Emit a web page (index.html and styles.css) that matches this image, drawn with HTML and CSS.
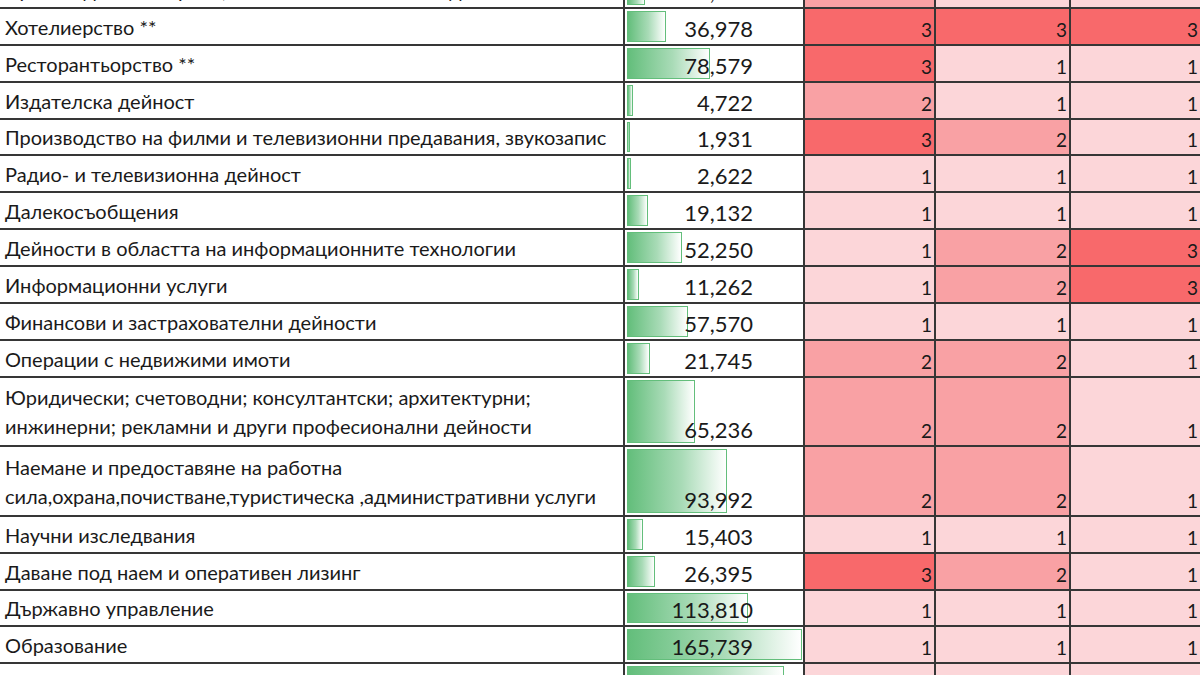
FILE: index.html
```html
<!DOCTYPE html>
<html lang="bg">
<head>
<meta charset="utf-8">
<title>Таблица</title>
<link rel="stylesheet" href="styles.css">
</head>
<body>
<div class="sheet">
  <div class="row">
    <div class="label">Производство на храни, напитки и тютюневи изделия</div>
    <div class="value"><span class="bar" style="width:18px"></span><span class="num">15,545</span></div>
    <div class="lvl l2">2</div><div class="lvl l1">1</div><div class="lvl l1 last">1</div>
  </div>
  <div class="row">
    <div class="label">Хотелиерство **</div>
    <div class="value"><span class="bar" style="width:39px"></span><span class="num">36,978</span></div>
    <div class="lvl l3">3</div><div class="lvl l3">3</div><div class="lvl l3 last">3</div>
  </div>
  <div class="row">
    <div class="label">Ресторантьорство **</div>
    <div class="value"><span class="bar" style="width:83px"></span><span class="num">78,579</span></div>
    <div class="lvl l3">3</div><div class="lvl l1">1</div><div class="lvl l1 last">1</div>
  </div>
  <div class="row">
    <div class="label">Издателска дейност</div>
    <div class="value"><span class="bar" style="width:6px"></span><span class="num">4,722</span></div>
    <div class="lvl l2">2</div><div class="lvl l1">1</div><div class="lvl l1 last">1</div>
  </div>
  <div class="row">
    <div class="label">Производство на филми и телевизионни предавания, звукозапис</div>
    <div class="value"><span class="bar" style="width:3px"></span><span class="num">1,931</span></div>
    <div class="lvl l3">3</div><div class="lvl l2">2</div><div class="lvl l1 last">1</div>
  </div>
  <div class="row">
    <div class="label">Радио- и телевизионна дейност</div>
    <div class="value"><span class="bar" style="width:4px"></span><span class="num">2,622</span></div>
    <div class="lvl l1">1</div><div class="lvl l1">1</div><div class="lvl l1 last">1</div>
  </div>
  <div class="row">
    <div class="label">Далекосъобщения</div>
    <div class="value"><span class="bar" style="width:21px"></span><span class="num">19,132</span></div>
    <div class="lvl l1">1</div><div class="lvl l1">1</div><div class="lvl l1 last">1</div>
  </div>
  <div class="row">
    <div class="label">Дейности в областта на информационните технологии</div>
    <div class="value"><span class="bar" style="width:55px"></span><span class="num">52,250</span></div>
    <div class="lvl l1">1</div><div class="lvl l2">2</div><div class="lvl l3 last">3</div>
  </div>
  <div class="row">
    <div class="label">Информационни услуги</div>
    <div class="value"><span class="bar" style="width:12px"></span><span class="num">11,262</span></div>
    <div class="lvl l1">1</div><div class="lvl l2">2</div><div class="lvl l3 last">3</div>
  </div>
  <div class="row">
    <div class="label">Финансови и застрахователни дейности</div>
    <div class="value"><span class="bar" style="width:61px"></span><span class="num">57,570</span></div>
    <div class="lvl l1">1</div><div class="lvl l1">1</div><div class="lvl l1 last">1</div>
  </div>
  <div class="row">
    <div class="label">Операции с недвижими имоти</div>
    <div class="value"><span class="bar" style="width:23px"></span><span class="num">21,745</span></div>
    <div class="lvl l2">2</div><div class="lvl l2">2</div><div class="lvl l1 last">1</div>
  </div>
  <div class="row tall">
    <div class="label">Юридически; счетоводни; консултантски; архитектурни;<br>инжинерни; рекламни и други професионални дейности</div>
    <div class="value"><span class="bar" style="width:68px"></span><span class="num">65,236</span></div>
    <div class="lvl l2">2</div><div class="lvl l2">2</div><div class="lvl l1 last">1</div>
  </div>
  <div class="row tall">
    <div class="label">Наемане и предоставяне на работна<br>сила,охрана,почистване,туристическа ,административни услуги</div>
    <div class="value"><span class="bar" style="width:100px"></span><span class="num">93,992</span></div>
    <div class="lvl l2">2</div><div class="lvl l2">2</div><div class="lvl l1 last">1</div>
  </div>
  <div class="row">
    <div class="label">Научни изследвания</div>
    <div class="value"><span class="bar" style="width:16px"></span><span class="num">15,403</span></div>
    <div class="lvl l1">1</div><div class="lvl l1">1</div><div class="lvl l1 last">1</div>
  </div>
  <div class="row">
    <div class="label">Даване под наем и оперативен лизинг</div>
    <div class="value"><span class="bar" style="width:28px"></span><span class="num">26,395</span></div>
    <div class="lvl l3">3</div><div class="lvl l2">2</div><div class="lvl l1 last">1</div>
  </div>
  <div class="row">
    <div class="label">Държавно управление</div>
    <div class="value"><span class="bar" style="width:121px"></span><span class="num">113,810</span></div>
    <div class="lvl l1">1</div><div class="lvl l1">1</div><div class="lvl l1 last">1</div>
  </div>
  <div class="row">
    <div class="label">Образование</div>
    <div class="value"><span class="bar" style="width:175px"></span><span class="num">165,739</span></div>
    <div class="lvl l1">1</div><div class="lvl l1">1</div><div class="lvl l1 last">1</div>
  </div>
  <div class="row tall">
    <div class="label label-top">Хуманно здравеопазване и социална работа</div>
    <div class="value"><span class="bar" style="width:157px"></span><span class="num">148,912</span></div>
    <div class="lvl l1">1</div><div class="lvl l1">1</div><div class="lvl l1 last">1</div>
  </div>
</div>
</body>
</html>
```
FILE: styles.css
```css
html, body {
  margin: 0;
  padding: 0;
  background: #ffffff;
}
body {
  width: 1200px;
  height: 675px;
  overflow: hidden;
  font-family: Lato, "Open Sans", sans-serif;
  color: #1a1a1a;
}
.sheet {
  margin-top: -28px;
}
.row {
  display: grid;
  grid-template-columns: 625px 180px 131px 135px 129px;
  height: 36.9px;
  box-sizing: border-box;
  border-bottom: 2px solid #363636;
}
.row.tall {
  height: 69.5px;
}
.label {
  box-sizing: border-box;
  border-right: 2px solid #363636;
  padding: 0 0 2px 5px;
  font-size: 20px;
  line-height: 29px;
  display: flex;
  align-items: flex-end;
  white-space: nowrap;
  overflow: hidden;
}
.row.tall .label {
  padding-bottom: 4px;
}
.row.tall .label.label-top {
  align-items: flex-start;
  padding-top: 3px;
}
.value {
  box-sizing: border-box;
  border-right: 2px solid #363636;
  display: grid;
  padding: 2px 0 2px 2px;
}
.bar {
  grid-area: 1 / 1;
  justify-self: start;
  box-sizing: border-box;
  height: 100%;
  min-width: 3px;
  border: 1px solid #63be7b;
  background: linear-gradient(to right, #63be7b 0%, #a9dbb7 55%, #ffffff 100%);
}
.num {
  grid-area: 1 / 1;
  justify-self: end;
  align-self: end;
  padding-right: 50px;
  font-size: 22px;
  line-height: 26px;
}
.lvl {
  box-sizing: border-box;
  border-right: 2px solid #363636;
  display: flex;
  align-items: flex-end;
  justify-content: flex-end;
  padding: 0 2px 3px 0;
  font-size: 19px;
  line-height: 22px;
}
.lvl.last {
  border-right: none;
}
.l1 { background: #fcd6d9; }
.l2 { background: #f9a1a4; }
.l3 { background: #f8696b; }
```
